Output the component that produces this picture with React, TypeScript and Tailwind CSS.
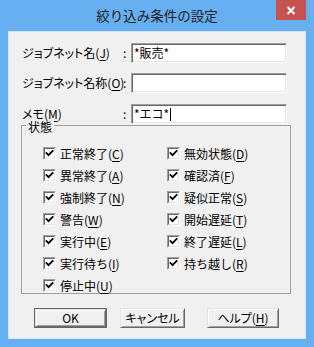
import React from 'react';

const jp = "font-['Noto_Sans_CJK_JP','Noto_Sans',sans-serif]";

const Mn = ({ text, k }: { text: string; k: string }) => (
  <span className="whitespace-nowrap">
    {text}(<span className="underline underline-offset-[2px]">{k}</span>)
  </span>
);

const CheckBox = () => (
  <span className="flex h-[13px] w-[13px] shrink-0 border border-t-[#a0a0a0] border-l-[#a0a0a0] border-b-white border-r-white">
    <span className="flex flex-1 items-center justify-center border border-t-[#696969] border-l-[#696969] border-b-[#e3e3e3] border-r-[#e3e3e3] bg-white">
      <svg width="9" height="9" viewBox="0 0 9 9">
        <polyline points="1.5,4 3.5,6.2 7.6,2" fill="none" stroke="#000" strokeWidth="1.8" strokeLinecap="square" />
      </svg>
    </span>
  </span>
);

const Check = ({ text, k }: { text: string; k: string }) => (
  <div className="flex h-[13px] items-center gap-[4px] text-[12px] leading-[13px]">
    <CheckBox />
    <Mn text={text} k={k} />
  </div>
);

const Field = ({ label, value, caret }: { label: React.ReactNode; value: string; caret?: boolean }) => (
  <div className="flex h-[20px] items-center text-[12px] leading-[12px]">
    <div className="w-[102px] pl-[1px] [font-feature-settings:'palt']">{label}</div>
    <div className="w-[8px]">:</div>
    <div className="flex h-[20px] w-[156px] items-center border border-t-[#a0a0a0] border-l-[#a0a0a0] border-b-white border-r-white bg-white pl-[1px] shadow-[inset_1px_1px_#696969,inset_-1px_-1px_#e3e3e3]">
      <span className="pl-[1px]">{value}</span>
      {caret && <span className="ml-[1px] h-[13px] w-px bg-black" />}
    </div>
  </div>
);

const Btn = ({ children, w, def }: { children: React.ReactNode; w: string; def?: boolean }) => (
  <div className={`${w} h-[20px] ${def ? 'border border-[#646464]' : ''}`}>
    <div className="flex h-full items-center justify-center border border-t-[#e3e3e3] border-l-[#e3e3e3] border-b-[#696969] border-r-[#696969] bg-[#f0f0f0] text-[12px] shadow-[inset_1px_1px_#fff,inset_-1px_-1px_#a0a0a0] [font-feature-settings:'palt']">
      {children}
    </div>
  </div>
);

const App = () => {
  return (
    <div className={`flex h-[347px] w-[314px] flex-col bg-[#66b0f2] text-black ${jp}`}>
      {/* Title bar */}
      <div className="relative flex h-[31px] shrink-0 items-center justify-center pb-[1px] text-[13.5px] text-[#222]">
        絞り込み条件の設定
        <div className="absolute right-[8px] top-0 flex h-[20px] w-[30px] items-center justify-center bg-[#c75050]">
          <svg width="10" height="9" viewBox="0 0 10 9">
            <path d="M1.5 1 L8.5 8 M8.5 1 L1.5 8" stroke="#fff" strokeWidth="2" />
          </svg>
        </div>
      </div>

      {/* Client area */}
      <div className="mx-[8px] mb-[8px] flex flex-1 flex-col border border-[#d3e6f7] bg-[#f0f0f0] px-[12px] pt-[11px]">
        <Field label={<Mn text="ジョブネット名" k="J" />} value="*販売*" />
        <div className="mt-[10px]">
          <Field label={<Mn text="ジョブネット名称" k="O" />} value="" />
        </div>
        <div className="mt-[11px]">
          <Field label={<Mn text="メモ" k="M" />} value="*エコ*" caret />
        </div>

        {/* Group box */}
        <div className="relative mt-[1px] mr-[2px] border border-[#a0a0a0] pb-[1px] pl-[21px] pt-[21px]">
          <span className="absolute -top-[5px] left-[4px] bg-[#f0f0f0] px-[2px] text-[12px] leading-[12px]">状態</span>
          <div className="flex">
            <div className="flex w-[124px] flex-col gap-[9px]">
              <Check text="正常終了" k="C" />
              <Check text="異常終了" k="A" />
              <Check text="強制終了" k="N" />
              <Check text="警告" k="W" />
              <Check text="実行中" k="E" />
              <Check text="実行待ち" k="I" />
              <Check text="停止中" k="U" />
            </div>
            <div className="flex flex-col gap-[9px]">
              <Check text="無効状態" k="D" />
              <Check text="確認済" k="F" />
              <Check text="疑似正常" k="S" />
              <Check text="開始遅延" k="T" />
              <Check text="終了遅延" k="L" />
              <Check text="持ち越し" k="R" />
            </div>
          </div>
        </div>

        {/* Buttons */}
        <div className="mt-[14px] flex pl-[13px]">
          <Btn w="w-[73px]" def>OK</Btn>
          <div className="ml-[13px]">
            <Btn w="w-[65px]">キャンセル</Btn>
          </div>
          <div className="ml-[22px]">
            <Btn w="w-[72px]">
              <Mn text="ヘルプ" k="H" />
            </Btn>
          </div>
        </div>
      </div>
    </div>
  );
};

export default App;
